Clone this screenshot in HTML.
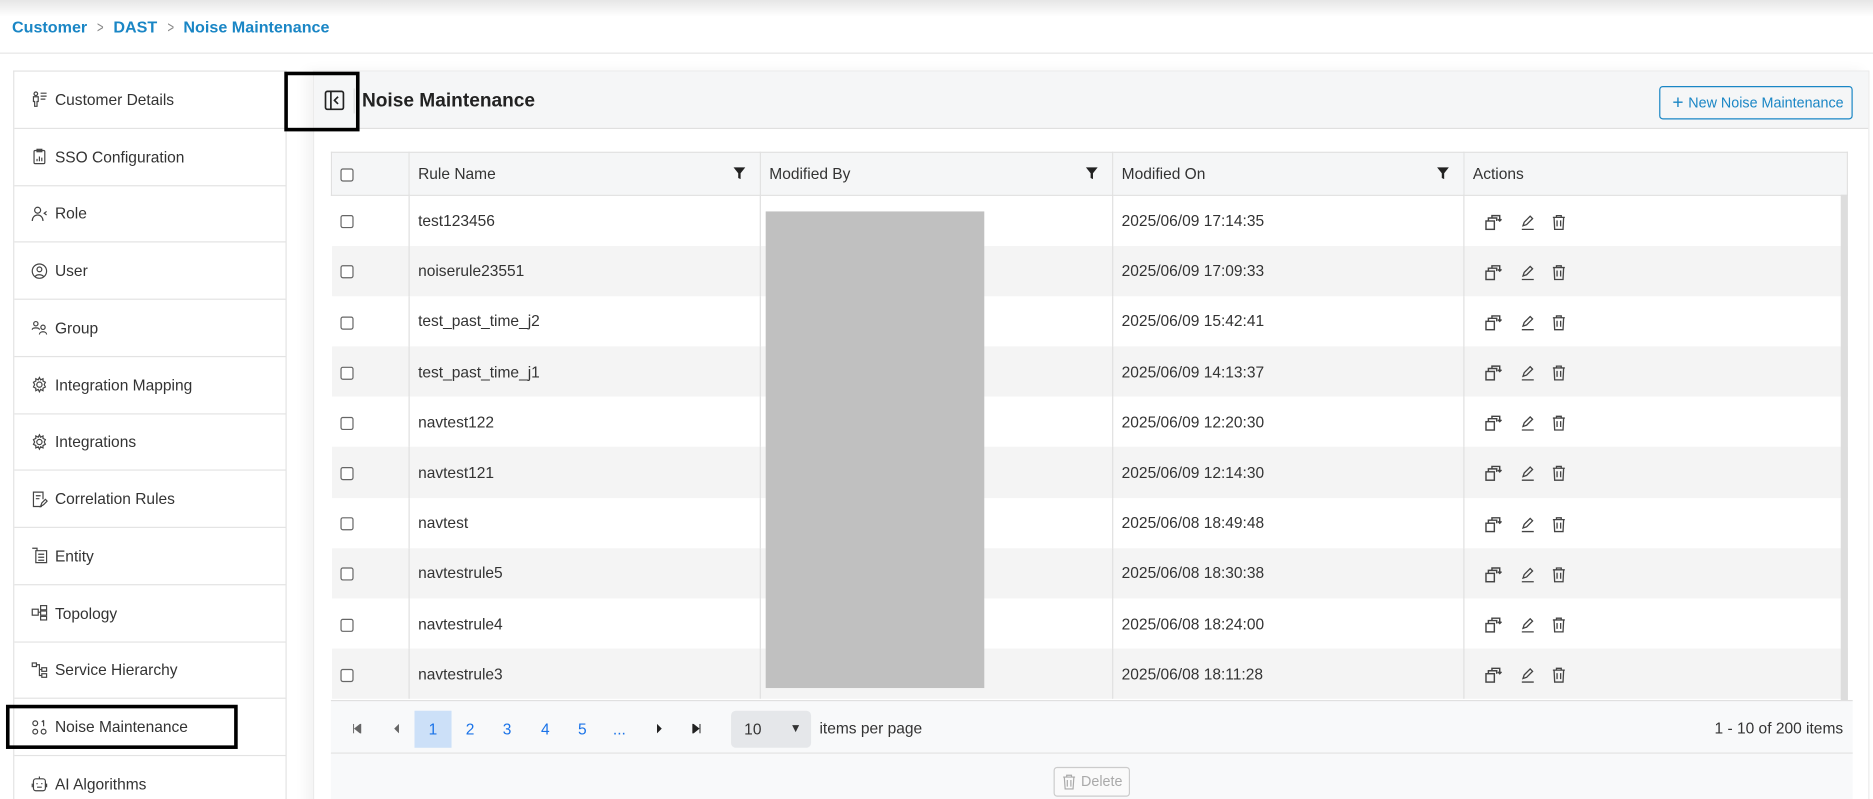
<!DOCTYPE html>
<html><head><meta charset="utf-8"><style>
*{box-sizing:border-box;margin:0;padding:0}
html,body{width:1873px;height:799px;overflow:hidden;background:#fff;font-family:"Liberation Sans",sans-serif;color:#333}
#w{position:absolute;left:0;top:0;width:1568px;height:669px;overflow:hidden;transform:scale(1.19452);transform-origin:0 0}
.abs{position:absolute}
.top{left:0;top:0;width:1568px;height:14px;background:linear-gradient(#e6e6e6,#fff)}
.bc{left:10px;top:15px;font-size:13.5px;font-weight:bold;color:#1a86c5}
.bc span{color:#888;font-weight:normal;margin:0 7px;display:inline-block;transform:scaleX(.7)}
.hl{left:0;top:44px;width:1568px;height:1px;background:#e6e6e6}
.side{left:11px;top:59px;width:229px;border:1px solid #e3e3e3;border-bottom:none;background:#fff}
.it{height:47.75px;border-bottom:1px solid #e3e3e3;display:flex;align-items:center;padding-left:14px;font-size:13px;color:#333}
.it svg{width:14px;height:14px;margin-right:6px;flex:none}
.box{border:3px solid #000}
.panel{left:262px;top:59px;width:1303px;height:620px;background:#fff;border:1px solid #ebebeb;box-shadow:-6px 0 10px rgba(0,0,0,.05)}
.ph{left:0;top:0;width:100%;height:48px;background:#f5f6f7;border-bottom:1px solid #e0e0e0}
.title{left:40px;top:16px;font-size:16px;font-weight:bold;color:#222}
.btn{left:1126px;top:12px;width:162px;height:28px;border:1px solid #1a86c5;border-radius:3px;color:#1a86c5;font-size:12px;line-height:26px;padding-left:10px}
table{border-collapse:collapse;position:absolute;left:14px;top:67px;width:1270px;font-size:13px;color:#333}
th{height:36px;background:#f5f6f7;font-weight:normal;text-align:left;padding-left:7px;border:1px solid #e0e0e0;position:relative}
td{height:42.2px;padding-left:7px;border-left:1px solid #e0e0e0}
tr.g td{background:#f4f4f4}
.cb{display:inline-block;width:11px;height:11px;border:1px solid #666;border-radius:2px;background:#fff;vertical-align:middle}
.f{position:absolute;right:12px;top:12px}
.act svg{margin-right:13px;vertical-align:middle}
.pg{left:14px;top:526px;width:1274px;height:45px;background:#f8f9fa;border-top:1px solid #e0e0e0;border-bottom:1px solid #e0e0e0;font-size:13px}
.foot{left:14px;top:571px;width:1274px;height:50px;background:#f8f9fa}
.n{position:absolute;top:8px;height:31px;width:31px;line-height:31px;text-align:center;color:#1a73e8}
</style></head><body><div id="w">
<div class="abs top"></div>
<div class="abs bc">Customer<span>&gt;</span>DAST<span>&gt;</span>Noise Maintenance</div>
<div class="abs hl"></div>
<div class="abs side">
<div class="it"><svg viewBox="0 0 14 14" fill="none" stroke="#444" stroke-width="1"><circle cx="4" cy="2.5" r="1.5"/><path d="M2 5h4v4H5v4H3V9H2z M8 2h5 M8 4.5h5 M8 7h4"/></svg>Customer Details</div>
<div class="it"><svg viewBox="0 0 14 14" fill="none" stroke="#444" stroke-width="1"><rect x="2.5" y="2" width="9" height="11" rx="1"/><rect x="5" y="1" width="4" height="2"/><path d="M5 11V9M7 11V7M9 11V8"/></svg>SSO Configuration</div>
<div class="it"><svg viewBox="0 0 14 14" fill="none" stroke="#444" stroke-width="1"><circle cx="5.5" cy="4" r="2.5"/><path d="M1 13c0-3 2-5 4.5-5s4.5 2 4.5 5M13 5l-2 1.5 2 1.5"/></svg>Role</div>
<div class="it"><svg viewBox="0 0 14 14" fill="none" stroke="#444" stroke-width="1"><circle cx="7" cy="7" r="6"/><circle cx="7" cy="5.5" r="2"/><path d="M3.5 11.5c1-2 5.5-2 7 0"/></svg>User</div>
<div class="it"><svg viewBox="0 0 14 14" fill="none" stroke="#444" stroke-width="1"><circle cx="4" cy="4" r="1.8"/><circle cx="10" cy="7" r="1.8"/><path d="M1 9c0-2 6-2 6 0M7 13c0-3 6-3 6 0"/></svg>Group</div>
<div class="it"><svg viewBox="0 0 14 14" fill="none" stroke="#444" stroke-width="1"><circle cx="7" cy="7" r="2.2"/><path d="M7 1l1 2 2-1 0 2 2 1-1 2 1 2-2 1 0 2-2-1-1 2-1-2-2 1 0-2-2-1 1-2-1-2 2-1 0-2 2 1z"/></svg>Integration Mapping</div>
<div class="it"><svg viewBox="0 0 14 14" fill="none" stroke="#444" stroke-width="1"><circle cx="7" cy="7" r="2.2"/><path d="M7 1l1 2 2-1 0 2 2 1-1 2 1 2-2 1 0 2-2-1-1 2-1-2-2 1 0-2-2-1 1-2-1-2 2-1 0-2 2 1z"/></svg>Integrations</div>
<div class="it"><svg viewBox="0 0 14 14" fill="none" stroke="#444" stroke-width="1"><path d="M9 13H2V1h8v6M4 4h4M4 6.5h3"/><path d="M8 13l1-3 3-3 1.5 1.5-3 3z"/></svg>Correlation Rules</div>
<div class="it"><svg viewBox="0 0 14 14" fill="none" stroke="#444" stroke-width="1"><path d="M1 1h4v2M4 3h9v10H4zM6 6h5M6 8.5h5M6 11h5"/></svg>Entity</div>
<div class="it"><svg viewBox="0 0 14 14" fill="none" stroke="#444" stroke-width="1"><rect x="1" y="4" width="5" height="5"/><rect x="8" y="1" width="5" height="3.5"/><rect x="8" y="5.5" width="5" height="3.5"/><rect x="8" y="10" width="5" height="3"/><path d="M6 6.5h2"/></svg>Topology</div>
<div class="it"><svg viewBox="0 0 14 14" fill="none" stroke="#444" stroke-width="1"><rect x="1" y="1" width="3.5" height="3"/><rect x="9" y="5" width="4" height="3"/><rect x="9" y="10" width="4" height="3"/><path d="M4.5 2.5H7v9h2M7 6.5h2"/></svg>Service Hierarchy</div>
<div class="it"><svg viewBox="0 0 14 14" fill="none" stroke="#444" stroke-width="1"><circle cx="3.5" cy="3.5" r="2"/><circle cx="3.5" cy="10.5" r="2"/><circle cx="10.5" cy="10.5" r="2"/><path d="M10.5 1v5M9 2.5l1.5-1.5"/></svg>Noise Maintenance</div>
<div class="it"><svg viewBox="0 0 14 14" fill="none" stroke="#444" stroke-width="1"><rect x="2" y="3" width="10" height="10" rx="2"/><path d="M7 1v2M5 6.5v1M9 6.5v1M5 10h4M1 7v3M13 7v3"/></svg>AI Algorithms</div>
</div>
<div class="abs box" style="left:5px;top:590px;width:194px;height:37px"></div>
<div class="abs panel">
<div class="abs ph"></div>
<svg class="abs" style="left:8px;top:15px" width="18" height="18" viewBox="0 0 18 18" fill="none" stroke="#222" stroke-width="1.4"><rect x="1.5" y="1.5" width="15" height="15" rx="1.5"/><path d="M6 1.5v15M12 6l-3 3 3 3"/></svg>
<div class="abs" style="left:33px;top:14px;width:1px;height:21px;background:#ddd"></div>
<div class="abs title">Noise Maintenance</div>
<div class="abs btn"><span style="font-size:16px;vertical-align:-1px;margin-right:4px">+</span>New Noise Maintenance</div>
<table>
<tr><th style="width:65px"><span class="cb"></span></th><th style="width:294px">Rule Name<svg class="f" width="10" height="10" viewBox="0 0 10 10"><path d="M0 0h10L6 5v5L4 9V5z" fill="#222"/></svg></th><th style="width:295px">Modified By<svg class="f" width="10" height="10" viewBox="0 0 10 10"><path d="M0 0h10L6 5v5L4 9V5z" fill="#222"/></svg></th><th style="width:294px">Modified On<svg class="f" width="10" height="10" viewBox="0 0 10 10"><path d="M0 0h10L6 5v5L4 9V5z" fill="#222"/></svg></th><th>Actions</th></tr>
</table>
<div class="abs" style="left:378px;top:117px;width:183px;height:399px;background:#c0c0c0"></div>
<div class="abs" style="left:1278px;top:103px;width:6px;height:423px;background:#ddd"></div>
<div class="abs pg">
<svg class="abs" style="left:18px;top:19px" width="8" height="8" viewBox="0 0 8 8"><path d="M1 0v8M7 0L2 4l5 4z" fill="#666" stroke="#666" stroke-width=".8"/></svg>
<svg class="abs" style="left:51px;top:19px" width="8" height="8" viewBox="0 0 8 8"><path d="M6 0L2 4l4 4z" fill="#666"/></svg>
<div class="n" style="left:70px;background:#cce0f8">1</div>
<div class="n" style="left:101px">2</div><div class="n" style="left:132px">3</div><div class="n" style="left:164px">4</div><div class="n" style="left:195px">5</div><div class="n" style="left:226px">...</div>
<svg class="abs" style="left:271px;top:19px" width="8" height="8" viewBox="0 0 8 8"><path d="M2 0l4 4-4 4z" fill="#222"/></svg>
<svg class="abs" style="left:302px;top:19px" width="8" height="8" viewBox="0 0 8 8"><path d="M1 0l5 4-5 4zM7 0v8" fill="#222" stroke="#222" stroke-width=".8"/></svg>
<div class="abs" style="left:335px;top:8px;width:67px;height:31px;background:#e5e7ea;border-radius:4px;line-height:31px;padding-left:11px">10<span style="position:absolute;right:8px;font-size:10px">▼</span></div>
<div class="abs" style="left:409px;top:15px">items per page</div>
<div class="abs" style="right:8px;top:15px">1 - 10 of 200 items</div>
</div>
<div class="abs foot"><div class="abs" style="left:605px;top:11px;width:64px;height:25px;border:1px solid #ccc;border-radius:3px;color:#aaa;font-size:12px;line-height:23px;padding-left:22px;background:#fafafa">Delete<svg class="abs" style="left:6px;top:5px" width="12" height="13" viewBox="0 0 12 13" fill="none" stroke="#aaa"><path d="M1 2.5h10M4 2.5V1h4v1.5M2 2.5l.7 10h6.6l.7-10M4.5 5v5.5M7.5 5v5.5"/></svg></div></div>
</div>
<div class="abs box" style="left:238px;top:60px;width:63px;height:50px"></div>
</div>
<script>
var t=document.querySelector('table');var d=[["test123456","2025/06/09 17:14:35"],["noiserule23551","2025/06/09 17:09:33"],["test_past_time_j2","2025/06/09 15:42:41"],["test_past_time_j1","2025/06/09 14:13:37"],["navtest122","2025/06/09 12:20:30"],["navtest121","2025/06/09 12:14:30"],["navtest","2025/06/08 18:49:48"],["navtestrule5","2025/06/08 18:30:38"],["navtestrule4","2025/06/08 18:24:00"],["navtestrule3","2025/06/08 18:11:28"]];
var ic='<svg width="16" height="14" viewBox="0 0 16 14" fill="none" stroke="#444" stroke-width="1.2"><rect x="1" y="6" width="7" height="7"/><path d="M3 6V3.5h7V6M6 3.5V1.5h6.5v4M14 4.5l-1.5 1.5L11 4.5"/></svg><svg width="14" height="14" viewBox="0 0 14 14" fill="none" stroke="#444" stroke-width="1.1"><path d="M3 10l1-3 5-5 2 2-5 5zM2 13h10"/></svg><svg width="12" height="14" viewBox="0 0 12 14" fill="none" stroke="#444" stroke-width="1.1"><path d="M1 3h10M4 3V1.5h4V3M2 3l.5 10h7l.5-10M4.5 5.5v5M7.5 5.5v5"/></svg>';
var tb=t.tBodies[0]||t;
d.forEach(function(r,i){var tr=document.createElement('tr');if(i%2)tr.className='g';tr.innerHTML='<td style="border-left:none"><span class="cb"></span></td><td>'+r[0]+'</td><td></td><td>'+r[1]+'</td><td class="act" style="padding-left:17px">'+ic+'</td>';tb.appendChild(tr);});
</script>
</body></html>
